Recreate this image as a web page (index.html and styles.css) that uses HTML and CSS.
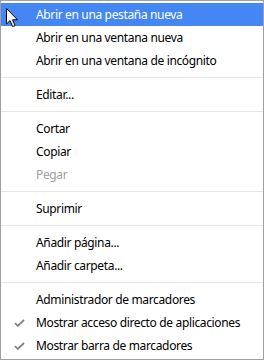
FILE: index.html
```html
<!DOCTYPE html>
<html lang="es">
<head>
<meta charset="utf-8">
<link rel="stylesheet" href="styles.css">
</head>
<body>
<div class="menu">
  <div class="item active">Abrir en una pestaña nueva</div>
  <div class="item">Abrir en una ventana nueva</div>
  <div class="item">Abrir en una ventana de incógnito</div>
  <div class="sep"></div>
  <div class="item">Editar...</div>
  <div class="sep"></div>
  <div class="item">Cortar</div>
  <div class="item">Copiar</div>
  <div class="item disabled">Pegar</div>
  <div class="sep"></div>
  <div class="item">Suprimir</div>
  <div class="sep"></div>
  <div class="item">Añadir página...</div>
  <div class="item">Añadir carpeta...</div>
  <div class="sep"></div>
  <div class="item">Administrador de marcadores</div>
  <div class="item checked"><svg class="check" width="11" height="8" viewBox="0 0 11 8"><path d="M1 4.2 L3.8 6.8 L10 1" fill="none" stroke="#808080" stroke-width="1.8"/></svg>Mostrar acceso directo de aplicaciones</div>
  <div class="item checked"><svg class="check" width="11" height="8" viewBox="0 0 11 8"><path d="M1 4.2 L3.8 6.8 L10 1" fill="none" stroke="#808080" stroke-width="1.8"/></svg>Mostrar barra de marcadores</div>
</div>
<svg class="cursor" width="13" height="20" viewBox="0 0 13 20"><path d="M0.5 0.5 L0.5 16 L4 12.6 L6.6 18.6 L9 17.6 L6.5 11.8 L11.5 11.8 Z" fill="#ffffff" stroke="#000000" stroke-width="1" stroke-linejoin="miter"/></svg>
</body>
</html>
```
FILE: styles.css
```css
html, body {
  margin: 0;
  padding: 0;
  background: #ffffff;
}
body {
  width: 264px;
  height: 360px;
  position: relative;
  overflow: hidden;
}
.menu {
  box-sizing: border-box;
  width: 264px;
  height: 360px;
  border: 1px solid #a0a0a0;
  padding: 2px 0;
  display: flex;
  flex-direction: column;
  font-family: "Noto Sans", "Open Sans", sans-serif;
  font-size: 12px;
  letter-spacing: -0.35px;
  color: #000000;
}
.item {
  height: 23px;
  line-height: 23px;
  padding-left: 35px;
  position: relative;
  white-space: nowrap;
  flex: none;
}
.item.active {
  background: #4486f4;
  color: #ffffff;
}
.item.disabled {
  color: #a0a0a0;
}
.sep {
  height: 11px;
  flex: none;
  display: flex;
  align-items: center;
}
.sep::before {
  content: "";
  display: block;
  width: 100%;
  height: 1px;
  background: #e6e6e6;
}
.check {
  position: absolute;
  left: 13px;
  top: 8px;
}
.cursor {
  position: absolute;
  left: 6px;
  top: 8px;
}
```
